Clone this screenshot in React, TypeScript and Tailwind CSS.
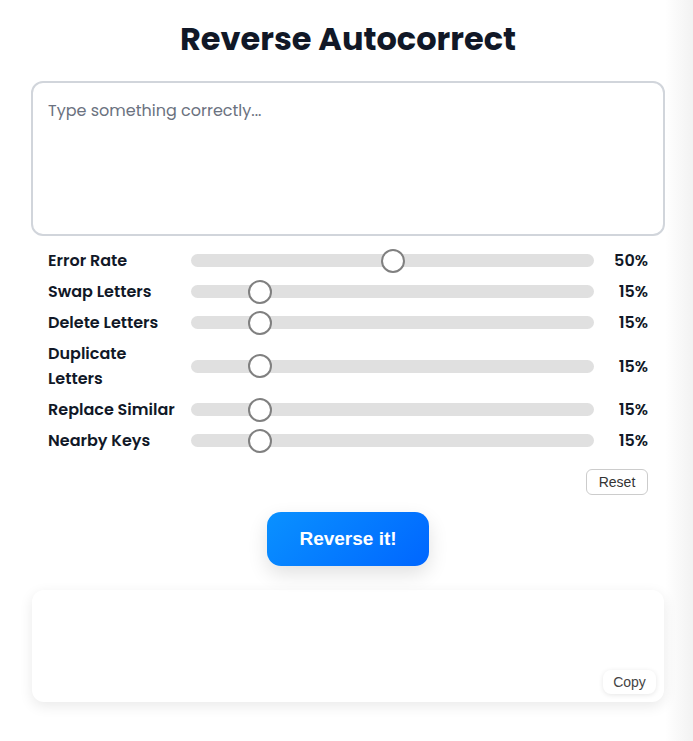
import React, { useState } from 'react';

interface SliderRow {
  key: string;
  label: string;
  value: number;
}

const initialRows: SliderRow[] = [
  { key: 'error', label: 'Error Rate', value: 50 },
  { key: 'swap', label: 'Swap Letters', value: 15 },
  { key: 'delete', label: 'Delete Letters', value: 15 },
  { key: 'duplicate', label: 'Duplicate Letters', value: 15 },
  { key: 'replace', label: 'Replace Similar', value: 15 },
  { key: 'nearby', label: 'Nearby Keys', value: 15 },
];

const Slider: React.FC<{ value: number }> = ({ value }) => {
  // thumb travels inside the track, like a native range input
  return (
    <div className="relative h-[13px] w-full rounded-full bg-[#e0e0e0]">
      <div
        className="absolute top-1/2 h-6 w-6 -translate-y-1/2 rounded-full border-2 border-[#808080] bg-white"
        style={{ left: `calc(${value / 100} * (100% - 24px))` }}
      />
    </div>
  );
};

export default function App() {
  const [text, setText] = useState('');
  const [rows] = useState(initialRows);

  return (
    <div className="min-h-[741px] w-full bg-[linear-gradient(to_right,#ffffff_0px,#ffffff_665px,#f2f2f2_693px)] font-['Poppins','Inter','Noto_Sans',sans-serif]">
      <div className="w-[634px] ml-[31px] pt-[16px] pb-[39px]">
        <h1 className="text-center text-[32px] leading-[46px] font-bold text-[#111827]">
          Reverse Autocorrect
        </h1>

        <textarea
          value={text}
          onChange={(e) => setText(e.target.value)}
          placeholder="Type something correctly..."
          className="mt-[19px] block h-[155px] w-full resize-none rounded-xl border-2 border-[#d1d5db] px-[15px] py-[16px] text-[16px] leading-6 text-[#111827] placeholder:text-[#6b7280] outline-none"
        />

        <div className="mt-[12px] px-[17px]">
          <div className="flex flex-col gap-[6px]">
            {rows.map((row) => (
              <div key={row.key} className="grid grid-cols-[143px_1fr_54px] items-center">
                <span className="text-[16px] leading-[25px] font-semibold text-[#111827] pr-4">{row.label}</span>
                <Slider value={row.value} />
                <span className="text-right text-[16px] leading-[25px] font-semibold text-[#111827]">{row.value}%</span>
              </div>
            ))}
          </div>

          <div className="mt-[16px] flex justify-end">
            <button className="h-[26px] w-[62px] rounded-md border border-[#cccccc] bg-white font-['Liberation_Sans',Arial,sans-serif] text-[14px] text-[#333333]">
              Reset
            </button>
          </div>
        </div>

        <div className="mt-[17px] flex justify-center">
          <button className="h-[54px] w-[162px] rounded-[14px] bg-[linear-gradient(135deg,#0a91ff,#0066ff)] font-['Liberation_Sans',Arial,sans-serif] text-[19px] font-bold text-white shadow-[0_8px_20px_rgba(0,0,0,0.12)]">
            Reverse it!
          </button>
        </div>

        <div className="mt-[24px] mx-[1px] flex h-[112px] flex-col justify-end rounded-xl bg-white p-2 shadow-[0_4px_14px_rgba(0,0,0,0.09)]">
          <div className="flex justify-end">
            <button className="h-6 w-[53px] rounded-lg bg-white font-['Liberation_Sans',Arial,sans-serif] text-[14px] text-[#444444] shadow-[0_1px_5px_rgba(0,0,0,0.1)]">
              Copy
            </button>
          </div>
        </div>
      </div>
    </div>
  );
}
